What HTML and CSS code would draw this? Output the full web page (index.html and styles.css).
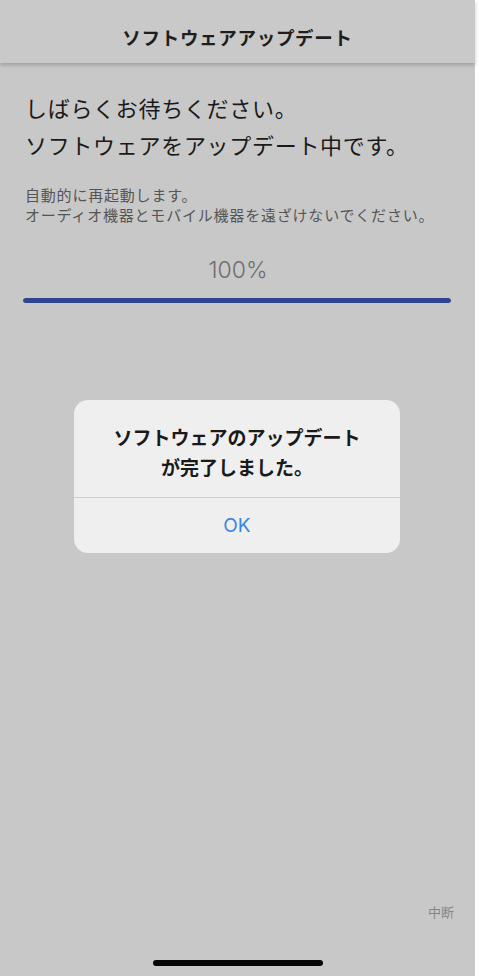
FILE: index.html
```html
<!DOCTYPE html>
<html lang="ja">
<head>
<meta charset="utf-8">
<title>ソフトウェアアップデート</title>
<link rel="stylesheet" href="styles.css">
</head>
<body>
<div class="screen">
  <header class="topbar">
    <h1 class="topbar-title">ソフトウェアアップデート</h1>
  </header>
  <main class="content">
    <p class="lead">しばらくお待ちください。<br>ソフトウェアをアップデート中です。</p>
    <p class="note">自動的に再起動します。<br>オーディオ機器とモバイル機器を遠ざけないでください。</p>
    <div class="percent">100%</div>
    <div class="bar"><div class="bar-fill" style="width:100%"></div></div>
  </main>
  <div class="spacer"></div>
  <div class="footer">
    <span class="cancel">中断</span>
  </div>
  <div class="home-area"><div class="home-indicator"></div></div>

  <div class="alert">
    <div class="alert-body">ソフトウェアのアップデート<br>が完了しました。</div>
    <div class="alert-button">OK</div>
  </div>
</div>
</body>
</html>
```

FILE: styles.css
```css
* { box-sizing: border-box; }
html, body {
  margin: 0;
  padding: 0;
  background: #ffffff;
}
body {
  font-family: "Noto Sans CJK JP", "Noto Sans", sans-serif;
  color: #1c1c1c;
}
.screen {
  position: relative;
  width: 475px;
  height: 976px;
  background: #c8c8c8;
  display: flex;
  flex-direction: column;
}
.topbar {
  height: 63px;
  flex: 0 0 63px;
  background: #c9c9c9;
  display: flex;
  align-items: center;
  justify-content: center;
  box-shadow: 0 2px 4px rgba(0, 0, 0, 0.22);
  position: relative;
  z-index: 1;
}
.topbar-title {
  margin: 0;
  font-size: 18.5px;
  letter-spacing: 0.7px;
  font-weight: 700;
  color: #1e1e1e;
  padding-top: 10px;
}
.content {
  padding: 0 24px 0 25px;
}
.lead {
  margin: 26px 0 0 0;
  font-size: 22px;
  letter-spacing: 0.7px;
  line-height: 37px;
  font-weight: 400;
  color: #1a1a1a;
}
.note {
  margin: 22px 0 0 0;
  font-size: 15px;
  letter-spacing: 0.8px;
  line-height: 20px;
  color: #555555;
}
.percent {
  margin-top: 30px;
  text-align: center;
  font-family: Inter, "Noto Sans", sans-serif;
  font-weight: 300;
  font-size: 23px;
  line-height: 30px;
  color: #6e6e6e;
}
.bar {
  margin: 13px 0 0 -2px;
  height: 5px;
  width: 428px;
  border-radius: 3px;
  background: #b0b0b0;
  overflow: hidden;
}
.bar-fill {
  height: 100%;
  background: #2f4592;
  border-radius: 3px;
}
.spacer { flex: 1; }
.footer {
  display: flex;
  justify-content: flex-end;
  padding-right: 21px;
}
.cancel {
  font-size: 13px;
  line-height: 20px;
  color: #878787;
}
.home-area {
  display: flex;
  justify-content: center;
  padding: 38px 0 10px 0;
}
.home-indicator {
  width: 170px;
  height: 6px;
  border-radius: 3px;
  background: #050505;
}
.alert {
  position: absolute;
  left: 74px;
  top: 400px;
  width: 326px;
  height: 153px;
  background: #efefef;
  border-radius: 14px;
  display: flex;
  flex-direction: column;
  overflow: hidden;
  z-index: 2;
}
.alert-body {
  padding: 22px 16px 0 16px;
  height: 98px;
  text-align: center;
  font-size: 19px;
  line-height: 30px;
  font-weight: 700;
  color: #1a1a1a;
  border-bottom: 1px solid #cfcfcf;
}
.alert-button {
  flex: 1;
  display: flex;
  align-items: center;
  justify-content: center;
  font-family: Inter, "Noto Sans", sans-serif;
  font-size: 19px;
  color: #3a86e4;
}
```
